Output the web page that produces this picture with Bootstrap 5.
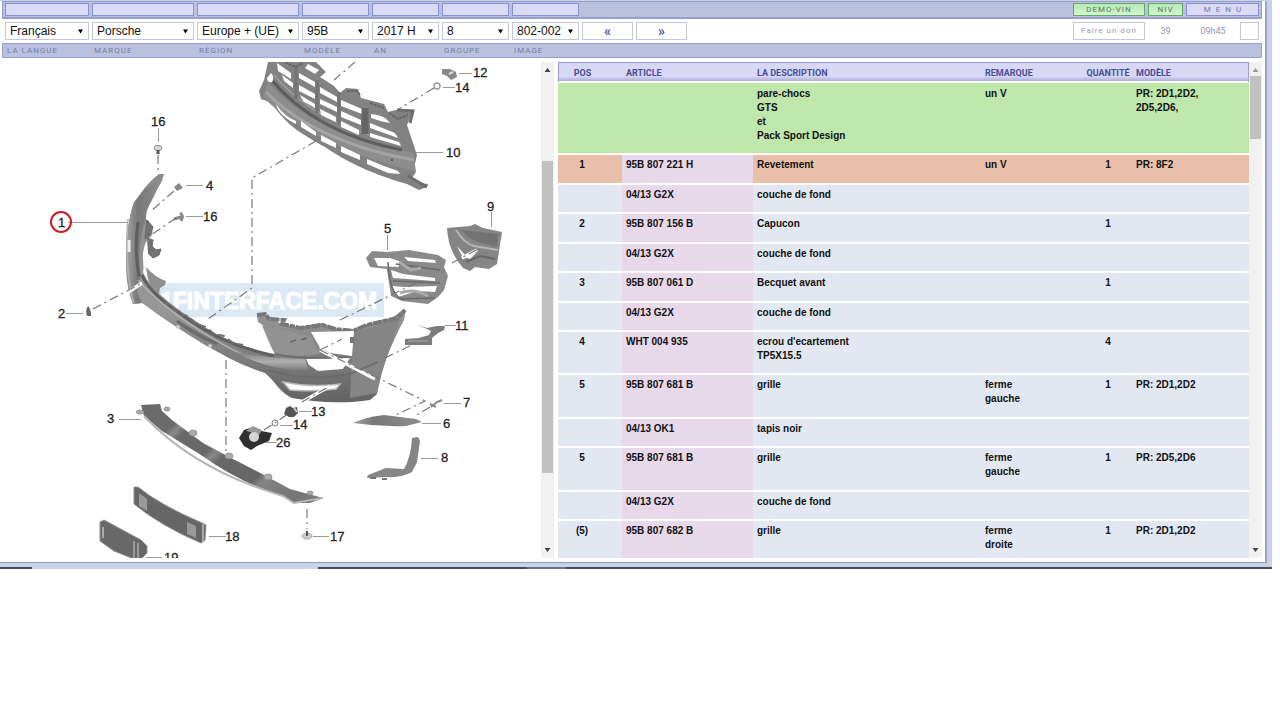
<!DOCTYPE html>
<html lang="fr">
<head>
<meta charset="utf-8">
<meta name="viewport" content="width=device-width, initial-scale=1">
<title>Porsche 95B – 802-002</title>
<link href="https://cdn.jsdelivr.net/npm/bootstrap@5.3.0/dist/css/bootstrap.min.css" rel="stylesheet">
<style>
  :root { --ui: Roboto, "Noto Sans", sans-serif; --line: #9a9dd0; --panel: calc(100vh - 224px); }
  body { font-family: "Liberation Sans", Arial, sans-serif; font-size: 10px; line-height: 14px; color: #111; background: #fff; }
  .app-frame { margin-right: 8px; background: #c8d3e5; padding: 1px 5px 4px 0; }
  .app-body { background: #fff; border-right: 2px solid #9fa3cf; border-bottom: 1px solid #9499c8; padding: 0 3px 4px 2px; }
  .strip { background: #b9c1de; border: 1px solid var(--line); }
  .strip-top { height: 18px; border-bottom-width: 2px; padding: 1px 2px 0; }
  .strip-labels { height: 15px; padding: 0 2px; font: 8px/14px var(--ui); letter-spacing: 1px; color: #777ba6; }
  .strip-labels label { padding-left: 2px; }
  .row-select { padding: 3px 3px 0; height: 24px; }
  .cells { gap: 3px; }
  .w-lang { width: 84px; } .w-brand { width: 102px; } .w-std { width: 67px; } .w-nav { width: 51px; }
  .w-demo { width: 72px; } .w-niv { width: 35px; } .w-menu { width: 73px; } .w-code { width: 19px; }
  .ui-btn { height: 13px; padding: 0; border: 1px solid #8a8fd0; border-radius: 0; background: #dadaf5; font: 8px/11px var(--ui); color: #7477a8; }
  .ui-btn.go { background: linear-gradient(#b9e8b6, #d3f5d1); border-color: #62a866; color: #55795d; letter-spacing: 1px; }
  .ui-btn.menu { letter-spacing: 5px; text-indent: 5px; }
  .pick.form-select { height: 18px; padding: 0 14px 0 4px; border: 1px solid #c3c6dc; border-radius: 0; font-size: 12px; line-height: 16px; color: #111;
    background: #fff url("data:image/svg+xml,%3Csvg xmlns='http://www.w3.org/2000/svg' viewBox='0 0 6 5'%3E%3Cpath d='M0 0h6L3 5z'/%3E%3C/svg%3E") no-repeat right 5px center / 5px 5px; }
  .plain-btn { height: 18px; padding: 0; border: 1px solid #c3c6dc; border-radius: 0; background: #fff; color: #4a5b92; font: bold 14px/14px var(--ui); }
  .plain-btn.don { font: 8px/16px var(--ui); letter-spacing: 1px; color: #8f96b4; }
  .stat { font: 9px/18px var(--ui); color: #8f96b4; text-align: center; }
  .panels { display: grid; grid-template-columns: minmax(0, 552fr) minmax(0, 704fr); gap: 4px; padding-top: 4px; }
  .pane { height: var(--panel); overflow: hidden; }
  .pane svg.drawing { width: 100%; height: 100%; display: block; }
  .sbar { width: 13px; background: #f1f1f1; flex: none; }
  .sbar i { display: block; background: #c1c1c1; margin: 0 1px; }
  .sbar .up, .sbar .down { width: 6px; height: 4px; background: #444; clip-path: polygon(0 0, 100% 0, 50% 100%); margin: 6px auto; }
  .sbar .up { clip-path: polygon(50% 0, 100% 100%, 0 100%); }
  .sbar .up.off { background: #999; }
  .sbar .down { margin-top: auto; }
  .parts { table-layout: fixed; width: 100%; margin: 0; border-collapse: separate; border-spacing: 0; font-weight: bold; color: #111; line-height: 14px; --bs-table-bg: transparent; }
  .parts > :not(caption) > * > * { padding: 3px 4px 10px; border: 0; border-bottom: 2px solid #fff; background: #e2e7f1; background-clip: padding-box; vertical-align: top; color: #111; box-shadow: none; }
  .parts > thead > tr > th { height: 21px; padding: 4px 4px 0; font: bold 9px/13px var(--ui); color: #4b4b9b; background: linear-gradient(#d8d8f5 0 75%, #a9a9dc) padding-box; border-top: 1px solid var(--line); white-space: nowrap; }
  .parts > thead > tr > th:first-child { border-left: 1px solid var(--line); }
  .parts > thead > tr > th:last-child { border-right: 1px solid var(--line); }
  .parts tr > :nth-child(1) { text-align: center; padding-left: 0; padding-right: 16px; }
  .parts tr > :nth-child(5) { text-align: center; padding-left: 0; padding-right: 0; }
  .parts > tbody > tr > :nth-child(2) { background-color: #e7d9ea; }
  .parts > tbody > tr.main > td { padding-bottom: 11px; }
  .parts > tbody > tr.note > td { background-color: #c0e7ab; padding-top: 4px; }
  .parts > tbody > tr.hit > td:not(:nth-child(2)) { background-color: #eabfa9; }
  .taskline { height: 2px; margin-right: 8px; background: linear-gradient(90deg, #444b5c 2.5%, #c8d3e5 2.5% 25%, #444b5c 25% 41.4%, #6a7284 41.4% 44.5%, #444b5c 44.5%); }
  .drawing text { font: 13px "Liberation Sans", Arial, sans-serif; fill: #222; stroke: #222; stroke-width: .3; }
  .drawing .wm { font: bold 23px "Liberation Sans", Arial, sans-serif; fill: #fff; stroke: #fff; stroke-width: 1; }
</style>
</head>
<body>
<div class="app-frame">
 <div class="app-body">
  <header>
   <div class="strip strip-top d-flex cells">
    <button class="btn ui-btn w-lang" aria-label="Langue"></button><button class="btn ui-btn w-brand" aria-label="Marque"></button><button class="btn ui-btn w-brand" aria-label="Région"></button><button class="btn ui-btn w-std" aria-label="Modèle"></button><button class="btn ui-btn w-std" aria-label="An"></button><button class="btn ui-btn w-std" aria-label="Groupe"></button><button class="btn ui-btn w-std" aria-label="Image"></button>
    <button class="btn ui-btn go w-demo ms-auto">DEMO-VIN</button><button class="btn ui-btn go w-niv">NIV</button><button class="btn ui-btn menu w-menu">MENU</button>
   </div>
   <div class="row-select d-flex cells">
    <select id="s1" class="form-select pick w-lang"><option>Français</option></select>
    <select id="s2" class="form-select pick w-brand"><option>Porsche</option></select>
    <select id="s3" class="form-select pick w-brand"><option>Europe + (UE)</option></select>
    <select id="s4" class="form-select pick w-std"><option>95B</option></select>
    <select id="s5" class="form-select pick w-std"><option>2017 H</option></select>
    <select id="s6" class="form-select pick w-std"><option>8</option></select>
    <select id="s7" class="form-select pick w-std"><option>802-002</option></select>
    <button class="btn plain-btn w-nav">«</button><button class="btn plain-btn w-nav">»</button>
    <button class="btn plain-btn don w-demo ms-auto">Faire un don</button>
    <span class="stat w-niv">39</span>
    <span class="w-menu d-flex"><span class="stat flex-fill">09h45</span><input class="plain-btn w-code" aria-label="Code"></span>
   </div>
   <div class="strip strip-labels d-flex cells">
    <label for="s1" class="w-lang">LA LANGUE</label><label for="s2" class="w-brand">MARQUE</label><label for="s3" class="w-brand">RÉGION</label><label for="s4" class="w-std">MODÈLE</label><label for="s5" class="w-std">AN</label><label for="s6" class="w-std">GROUPE</label><label for="s7" class="w-std">IMAGE</label>
   </div>
  </header>
  <main class="panels">
   <section class="pane d-flex">
    <div class="flex-fill overflow-hidden">
<svg class="drawing" viewBox="2 62 539 496" preserveAspectRatio="xMinYMin slice" role="img" aria-label="Pare-chocs avant">
 <defs>
  <linearGradient id="g" x1="0" y1="0" x2="1" y2="1"><stop offset="0" stop-color="#6f6f6f"/><stop offset=".5" stop-color="#999"/><stop offset="1" stop-color="#747474"/></linearGradient>
  <linearGradient id="gv" x1="0" y1="0" x2="0" y2="1"><stop offset="0" stop-color="#7c7c7c"/><stop offset=".5" stop-color="#b0b0b0"/><stop offset="1" stop-color="#777"/></linearGradient>
  <linearGradient id="gh" x1="0" y1="0" x2="1" y2="0"><stop offset="0" stop-color="#a0a0a0"/><stop offset=".3" stop-color="#787878"/><stop offset="1" stop-color="#8f8f8f"/></linearGradient>
  <linearGradient id="face" x1="0" y1="0" x2="0" y2="1"><stop offset="0" stop-color="#8c8c8c"/><stop offset=".6" stop-color="#979797"/><stop offset="1" stop-color="#636363"/></linearGradient>
  <linearGradient id="lip" x1="0" y1="0" x2="1" y2=".55"><stop offset="0" stop-color="#696969"/><stop offset=".22" stop-color="#6c6c6c"/><stop offset=".26" stop-color="#8a8a8a"/><stop offset=".3" stop-color="#696969"/><stop offset=".48" stop-color="#696969"/><stop offset=".52" stop-color="#8a8a8a"/><stop offset=".57" stop-color="#686868"/><stop offset=".8" stop-color="#666"/><stop offset=".84" stop-color="#858585"/><stop offset="1" stop-color="#777"/></linearGradient>
 </defs>
 <rect x="160" y="283" width="224" height="34" fill="#dde8f5"/>
 <text class="wm" x="160" y="309">1FINTERFACE.COM</text>
 <!-- 10: centre grille -->
 <path d="M268 62 264 80 259 91 261 99 272 103C285 125 305 136 325 147C352 166 385 178 407 184L419 190 427 187 428 184 419 183 412 178 416 172 414 168 417 155 414 146 407 125 413 111 396 110 388 112 384 104 361 98 358 89 346 88 340 93 334 86 320 77 326 72 316 62Z" fill="#828282"/>
 <path d="M268 82C300 118 345 140 413 153L416 171C365 160 300 135 263 97Z" fill="#8d8d8d"/>
 <path d="M266 92C300 127 355 150 414 160" fill="none" stroke="#a4a4a4" stroke-width="3"/>
 <path d="M270 78C305 121 355 141 402 150" fill="none" stroke="#5e5e5e" stroke-width="3"/>
 <path d="M274 75C308 115 355 133 401 144" fill="none" stroke="#9c9c9c" stroke-width="1.5"/>
 <g fill="#fff"><path d="M271 73q4 4 1 9q-5 1-5-4zM277 63l14 10v6l-13-8zM282 75l11 8v5l-9-7zM299 73l16 9v5l-16-9zM299 85l16 9v5l-16-8zM300 95l15 9v4l-12-7zM320 87l17 10v5l-17-9zM320 99l17 8v5l-17-8zM320 109l16 8v5l-15-7zM341 100l21 9v5l-21-8zM341 111l20 9v5l-20-8zM341 121l18 9v5l-18-8zM371 114q14 1 19 9q-8-1-19-5zM370 123l25 10 3 5-28-10zM370 133l29 9 2 4-31-9zM308 64l11 6-4 4-10-6z"/><path d="M276 104q9 13 20 17v3q-17-8-20-20zM301 121l15 11v4l-15-9zM321 135l15 8v5l-15-7zM341 146l19 9v5l-19-8zM367 159q16 7 31 12l2 3-12-1-21-9z"/></g>
 <path d="M317 80v33M339 92v33M296 66v33" stroke="#737373" stroke-width="3"/>
 <path d="M365 108v26" stroke="#666" stroke-width="7"/>
 <path d="M408 176 427 187M397 110l16 1-3 12" fill="none" stroke="#6d6d6d" stroke-width="3"/>
 <path d="M347 91h10l3 4M285 62l10 5 8-4M370 103l14 5M389 113l9 6 10-4" fill="none" stroke="#666" stroke-width="2" stroke-dasharray="3 1"/>
 <circle cx="392" cy="160" r="1" fill="#444"/>
 <!-- 1: bumper skin -->
 <path d="M159 174 164 174 162 181C153 195 146 207 146 219L153 227 152 235 146 242C140 256 145 266 143 272C151 292 180 311 202 325C228 343 252 349 274 354L278 342 275 333 258 322 257 316 264 313 275 320 281 324 300 327 320 323 335 328 350 331 362 325 392 318 401 311 406 310 404 320C391 344 381 369 377 394L370 400C340 405 310 401 292 398C280 393 275 381 265 373C229 362 180 331 142 303L133 304C127 290 126 277 126 258L128 226 132 208C138 195 149 181 159 174Z" fill="url(#face)"/>
 <path d="M146 267Q156 278 166 281L165 285 160 288 159 296Q148 289 146 267Z" fill="#8f8f8f"/>
 <path d="M132 208C125 236 126 265 133 304L142 303 137 292 141 276C138 260 139 235 146 219L146 212 153 198 160 184 162 178 145 189 134 202 132 208Z" fill="url(#gh)"/>
 <path d="M138 222Q134 250 139 276" fill="none" stroke="#5f5f5f" stroke-width="3"/>
 <path d="M142 275C148 290 165 303 182 315C214 338 240 348 274 356" fill="none" stroke="#606060" stroke-width="3"/>
 <path d="M128 219C124 255 130 292 134 303M138 280C166 312 235 358 271 363" fill="none" stroke="#b2b2b2" stroke-width="1.5"/>
 <path d="M129 240v12" stroke="#eee" stroke-width="3"/>
 <path d="M147 238l6 2-1 6 4 4 5-1-2 6-6 3-5-5M147 220l6 7-3 8-5 4z" fill="#727272" stroke="#686868" stroke-width="1"/>
 <path d="M176 322Q195 337 216 345L219 343Q197 333 178 320Z" fill="#6c6c6c"/>
 <path d="M163 302l8 4 8 8 9 2 8 8 10 3 8 7 10 2 9 7 10 2" fill="none" stroke="#707070" stroke-width="2" stroke-dasharray="7 4"/>
 <path d="M235 352Q265 358 305 359L309 371Q268 371 235 352Z" fill="url(#gv)"/>
 <path d="M262 325Q271 348 275 354 300 358 320 354L312 337Q290 331 262 325Z" fill="#929292"/>
 <path d="M353 332Q384 326 402 315Q386 352 377 393L350 398Z" fill="#858585"/>
 <path d="M257 315l8-1 4 5 15 1-2 4 18 4 23-3 12 4 18 2 14-6 30-7 8-8" fill="none" stroke="#777" stroke-width="4" stroke-dasharray="9 1 5 1"/>
 <path d="M311 332L354 331 352 356 330 353 320 348ZM306 359L350 358 343 369 318 371 309 365Z" fill="#fff"/>
 <path d="M350 337h4v6h-4z" fill="#777"/>
 <path d="M283 382Q313 388 340 384L336 389Q306 392 290 390Z" fill="#fff" stroke="#bbb" stroke-width="1.5"/>
 <path d="M268 370Q310 382 350 374L378 362M275 354Q305 360 350 357" fill="none" stroke="#6a6a6a" stroke-width="1.5"/>
 <path d="M290 342l6-2M301 340l6-2" stroke="#666" stroke-width="1.5"/>
 <circle cx="178" cy="327" r="2" fill="#ccc"/><circle cx="210" cy="346" r="2" fill="#ccc"/>
 <!-- 5: side grille -->
 <path d="M372 251 387 252 409 250 438 255 446 260 444 267 448 276 444 290 438 297 428 304 402 301 391 296 387 269 370 267 366 258Z" fill="#8a8a8a"/>
 <path d="M374 258h16l12 4-4 5-20-1zM404 257l31 3 1 3-28-2zM391 270l12 4 32 4v3l-42-3zM392 286l12 1 33-1-2 6-18-1-19 6z" fill="#fff"/>
 <path d="M388 262Q389 292 401 299L435 298M396 264l44 6M393 281l47 2" fill="none" stroke="#6a6a6a" stroke-width="1.5"/>
 <path d="M399 262l12 8 10-2M400 293q14-5 28 3" fill="none" stroke="#aaa" stroke-width="3"/>
 <!-- 9: vent -->
 <path d="M447 228 470 226 475 224 483 228 502 232 497 264 489 269 475 267 470 271 463 268Q448 251 447 228Z" fill="#858585"/>
 <path d="M456 230Q464 243 474 246L498 250" fill="none" stroke="#b5b5b5" stroke-width="2"/><path d="M462 230L498 234 497 246Q470 243 462 230Z" fill="#727272"/><path d="M457 246l8 9 11-2-6 6-8-3z" fill="#fff"/><path d="M466 262l14-6 15 3" stroke="#666" stroke-width="2" fill="none"/>
 <!-- 11: bracket -->
 <path d="M418 325l9 3 10-2h8l-1 4-6 3-6 5v7h-27v-6l14-1 10-3 2-4-4-2z" fill="#7c7c7c"/><path d="M408 341h20" stroke="#aaa"/>
 <!-- 6, 7, 8 -->
 <path d="M353 423Q366 417 384 415L416 419 422 422 406 426Q380 427 353 423Z" fill="url(#gh)"/>
 <path d="M431 407l6-5 5-2M430 404l6 3" stroke="#888" stroke-width="2" fill="none"/>
 <path d="M412 438l6-1 2 4-3 21-5 10q-10 6-26 5l-19 1 1-3 18-7 18 1q7-12 8-31z" fill="#868686"/><path d="M370 478h6M382 479h5" stroke="#777" stroke-width="2"/>
 <!-- 3: spoiler lip -->
 <path d="M141 405 160 404 162 411 172 420 203 443 231 458 266 476 290 489 323 498 310 503 294 503 283 496Q240 483 201 455L162 431 144 416Z" fill="url(#lip)"/>
 <path d="M144 416Q195 470 283 496L294 503 323 498" fill="none" stroke="#b5b5b5" stroke-width="2"/>
 <g fill="#aaa" stroke="#888" stroke-width=".7"><ellipse cx="140" cy="412" rx="4" ry="2"/><ellipse cx="167" cy="409" rx="3" ry="2"/><ellipse cx="193" cy="433" rx="4" ry="3"/><ellipse cx="229" cy="456" rx="4" ry="3"/><ellipse cx="268" cy="477" rx="4" ry="3"/><ellipse cx="310" cy="493" rx="3" ry="2"/></g>
 <!-- 13, 14, 26 -->
 <path d="M286 408l4-2 3 2 4-1 1 6-4 4h-5l-5-3z" fill="#555"/><path d="M294 408l3 4" stroke="#ccc" stroke-width="2"/><circle cx="275" cy="423" r="3" fill="#fff" stroke="#777"/>
 <path d="M239 438l5-8 9-3 8 4 11 2-3 8-12 5-6 4-7-4z" fill="#303030"/><path d="M246 431l7-5 9 4-3 5-9-3z" fill="#999"/><circle cx="254" cy="437" r="5" fill="#d5d5d5"/>
 <!-- 18, 19 -->
 <path d="M134 487h4Q160 505 202 523l4 2-1 15-4 3Q161 526 134 504Z" fill="#666" stroke="#8d8d8d"/><path d="M139 493l8 6v12l-8-5zM187 522l9 4v12l-9-4z" fill="#999"/><path d="M203 524v18" stroke="#aaa" stroke-width="2"/>
 <path d="M100 522l4-2 37 20 6 6v7l-8 8-25-10-14-10Z" fill="#686868" stroke="#8f8f8f"/><path d="M134 541v18M138 543v15" stroke="#999" stroke-width="2"/><path d="M103 527v11" stroke="#aaa" stroke-width="2"/>
 <!-- fixings -->
 <ellipse cx="158" cy="148" rx="4" ry="2.5" fill="#ddd" stroke="#888"/><path d="M158 150v4" stroke="#555" stroke-width="3"/>
 <path d="M174 187l5-4 4 5-6 3z" fill="#888"/><path d="M180 213q4 2 1 8M174 219l7-2" stroke="#888" stroke-width="3" fill="none"/>
 <path d="M87 316q-2-6 1-10 3 3 3 10z" fill="#666"/><path d="M442 69l8 0 6 3 1 5-6 3-4-4-5-2z" fill="#888"/><path d="M449 74l4-2" stroke="#ddd" stroke-width="2"/><circle cx="437" cy="86" r="3" fill="#fff" stroke="#999" stroke-width="1.5"/>
 <ellipse cx="307" cy="536" rx="5" ry="3" fill="#ccc" stroke="#aaa"/><path d="M307 531v5" stroke="#555" stroke-width="2"/>
 <!-- axes -->
 <g fill="none" stroke="#fff" stroke-width="3.5"><path d="M127 293L142 283M320 350L375 379M302 402L330 386M320 350l20-10M462 258l15-8"/></g>
 <g fill="none" stroke="#777" stroke-width="1.2" stroke-dasharray="9 4 2 4"><path d="M158 155v17M174 191L150 212M176 218L148 237M93 309L142 283M316 141L252 178V288L208 319M355 62L334 80M434 88L397 110M340 320L420 281M320 350L425 401 396 415M320 350l22-11M452 263l26-14M385 358L418 342M226 360V452M264 430L288 414M302 402L330 386M430 407l-13 8M307 509v20"/></g>
 <!-- leaders -->
 <path d="M68 222.5H127M158.500 128v14M186 185.500h17M186 216.500h17M66 313.500h17M119 419.500h22M459 73.500h13M443 87.500h12M416 152.500h27M491.500 212v15M387.500 235v15M445 325.500h11M444 403.500h17M422 423.500h19M421 458.500h17M299 411.500h13M280 425.500h13M266 442.500h11M209 536.500h17M313 536.500h16M146 557.500h16" fill="none" stroke="#999"/>
 <circle cx="61" cy="222" r="10" fill="none" stroke="#c91f28" stroke-width="2"/>
 <g><text x="58" y="227">1</text><text x="151" y="126">16</text><text x="206" y="190">4</text><text x="203" y="221">16</text><text x="58" y="318">2</text><text x="107" y="423">3</text><text x="473" y="77">12</text><text x="455" y="92">14</text><text x="446" y="157">10</text><text x="487" y="211">9</text><text x="384" y="233">5</text><text x="455" y="330">11</text><text x="463" y="407">7</text><text x="443" y="428">6</text><text x="441" y="462">8</text><text x="311" y="416">13</text><text x="293" y="429">14</text><text x="276" y="447">26</text><text x="225" y="541">18</text><text x="330" y="541">17</text><text x="164" y="562">19</text></g>
</svg>
    </div>
    <div class="sbar d-flex flex-column" aria-hidden="true"><i class="up"></i><i style="height:63%;margin-top:83px"></i><i class="down"></i></div>
   </section>
   <section class="pane d-flex">
    <div class="flex-fill overflow-hidden">
     <table class="table parts">
      <colgroup><col style="width:64px"><col style="width:131px"><col><col style="width:103px"><col style="width:48px"><col style="width:117px"></colgroup>
      <thead><tr><th>POS</th><th>ARTICLE</th><th>LA DESCRIPTION</th><th>REMARQUE</th><th>QUANTITÉ</th><th>MODÈLE</th></tr></thead>
      <tbody>
       <tr class="note"><td></td><td></td><td>pare-chocs<br>GTS<br>et<br>Pack Sport Design</td><td>un V</td><td></td><td>PR: 2D1,2D2,<br>2D5,2D6,</td></tr>
       <tr class="main hit"><td>1</td><td>95B 807 221 H</td><td>Revetement</td><td>un V</td><td>1</td><td>PR: 8F2</td></tr>
       <tr><td></td><td>04/13 G2X</td><td>couche de fond</td><td></td><td></td><td></td></tr>
       <tr class="main"><td>2</td><td>95B 807 156 B</td><td>Capucon</td><td></td><td>1</td><td></td></tr>
       <tr><td></td><td>04/13 G2X</td><td>couche de fond</td><td></td><td></td><td></td></tr>
       <tr class="main"><td>3</td><td>95B 807 061 D</td><td>Becquet avant</td><td></td><td>1</td><td></td></tr>
       <tr><td></td><td>04/13 G2X</td><td>couche de fond</td><td></td><td></td><td></td></tr>
       <tr><td>4</td><td>WHT 004 935</td><td>ecrou d'ecartement<br>TP5X15.5</td><td></td><td>4</td><td></td></tr>
       <tr class="main"><td>5</td><td>95B 807 681 B</td><td>grille</td><td>ferme<br>gauche</td><td>1</td><td>PR: 2D1,2D2</td></tr>
       <tr><td></td><td>04/13 OK1</td><td>tapis noir</td><td></td><td></td><td></td></tr>
       <tr class="main"><td>5</td><td>95B 807 681 B</td><td>grille</td><td>ferme<br>gauche</td><td>1</td><td>PR: 2D5,2D6</td></tr>
       <tr><td></td><td>04/13 G2X</td><td>couche de fond</td><td></td><td></td><td></td></tr>
       <tr><td>(5)</td><td>95B 807 682 B</td><td>grille</td><td>ferme<br>droite</td><td>1</td><td>PR: 2D1,2D2</td></tr>
      </tbody>
     </table>
    </div>
    <div class="sbar d-flex flex-column" aria-hidden="true"><i class="up off"></i><i style="height:63px;margin-top:-2px"></i><i class="down"></i></div>
   </section>
  </main>
 </div>
</div>
<div class="taskline"></div>
<script src="https://cdn.jsdelivr.net/npm/bootstrap@5.3.0/dist/js/bootstrap.bundle.min.js"></script>
</body>
</html>
